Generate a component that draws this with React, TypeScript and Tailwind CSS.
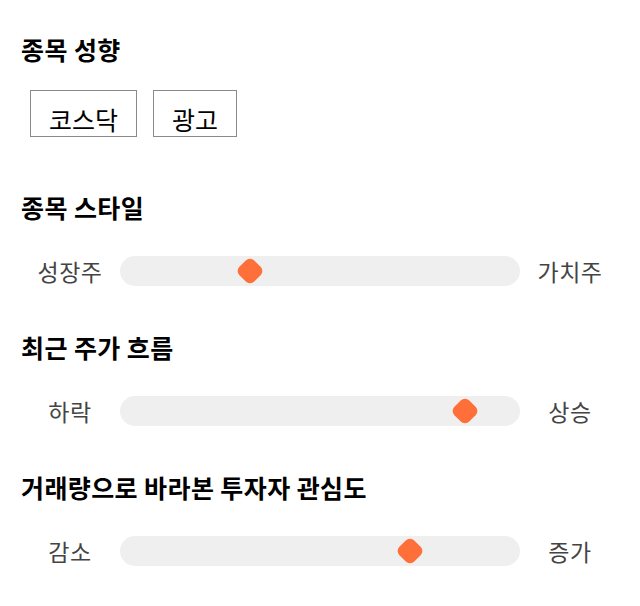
const FONT = '"Noto Sans CJK KR", "Noto Sans", sans-serif';

type SliderRow = {
  title: string;
  left: string;
  right: string;
  value: number; // 0..1, thumb centre along the track
};

const SLIDERS: SliderRow[] = [
  { title: '종목 스타일', left: '성장주', right: '가치주', value: 0.325 },
  { title: '최근 주가 흐름', left: '하락', right: '상승', value: 0.862 },
  { title: '거래량으로 바라본 투자자 관심도', left: '감소', right: '증가', value: 0.726 },
];

const TAGS = ['코스닥', '광고'];

function Slider({ value }: { value: number }) {
  return (
    <div className="relative h-[30px] flex-1 rounded-full bg-[#efefef]">
      <div
        className="absolute top-1/2 h-[21px] w-[21px] -translate-x-1/2 -translate-y-1/2 rotate-45 rounded-[6px] bg-[#ff6f3a]"
        style={{ left: `${value * 100}%` }}
      />
    </div>
  );
}

export default function App() {
  return (
    <div className="min-h-screen bg-white pt-[35px] text-black" style={{ fontFamily: FONT }}>
      {/* 종목 성향 */}
      <h2 className="pl-[21px] text-[25px] font-bold leading-[28px] tracking-[0.4px]">종목 성향</h2>
      <div className="mt-[27px] flex gap-4 pl-[30px]">
        {TAGS.map(tag => (
          <div
            key={tag}
            className="h-[47px] border border-[#8a8a8a] px-[18px] pt-[12px] text-[25px] leading-[32px]"
          >
            {tag}
          </div>
        ))}
      </div>

      {SLIDERS.map((s, i) => (
        <div key={s.title} className={i === 0 ? 'mt-[56px]' : 'mt-[47px]'}>
          <h2 className="pl-[21px] text-[25px] font-bold leading-[28px] tracking-[0.4px]">{s.title}</h2>
          <div className="mt-[35px] flex items-center px-5">
            <span className="w-[100px] text-center text-[23px] leading-[30px] tracking-[0.5px] text-[#444]">
              {s.left}
            </span>
            <Slider value={s.value} />
            <span className="w-[100px] text-center text-[23px] leading-[30px] tracking-[0.5px] text-[#444]">
              {s.right}
            </span>
          </div>
        </div>
      ))}
    </div>
  );
}
